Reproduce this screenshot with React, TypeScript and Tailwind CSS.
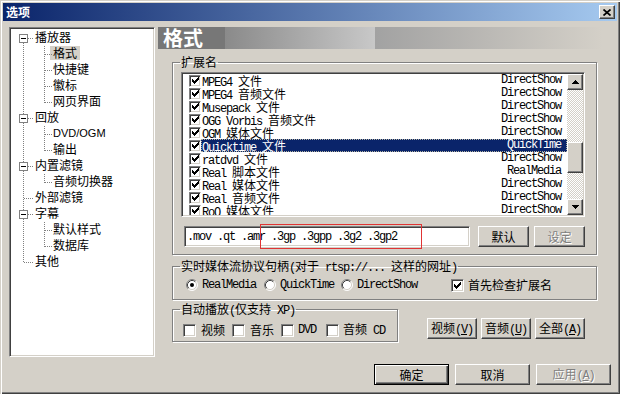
import React from 'react';

const raised =
  'border border-t-white border-l-white border-r-[#404040] border-b-[#404040] shadow-[inset_-1px_-1px_0_#808080]';
const sunken =
  'border border-t-[#808080] border-l-[#808080] border-r-white border-b-white shadow-[inset_1px_1px_0_#404040,inset_-1px_-1px_0_#d4d0c8]';
const cjk = "font-['Noto_Sans_CJK_SC',sans-serif] tracking-normal";
const mono = "font-['Liberation_Mono','Noto_Sans_CJK_SC',monospace] tracking-[-1.2px] whitespace-pre";

// split latin / CJK runs so the latin part gets the narrow fixed font
function Mix({ text }: { text: string }) {
  const parts = text.split(/([\u3000-\u9fff\uff00-\uffef]+)/);
  return (
    <>
      {parts.map((p, i) =>
        p === '' ? null : (
          <span key={i} className={i % 2 ? cjk : mono}>
            {p}
          </span>
        ),
      )}
    </>
  );
}

function Check({ on = false, small = false }: { on?: boolean; small?: boolean }) {
  return (
    <span
      className={`${small ? 'w-[12px] h-[12px]' : 'w-[13px] h-[13px]'} shrink-0 bg-white flex items-center justify-center ${sunken}`}
    >
      {on && (
        <svg width="7" height="7" viewBox="0 0 7 7" shapeRendering="crispEdges">
          <path d="M0 2L2 4L6 0L7 0L7 3L2 7L0 5Z" fill="#000" />
        </svg>
      )}
    </span>
  );
}

function Radio({ on = false }: { on?: boolean }) {
  return (
    <svg width="12" height="12" viewBox="0 0 12 12" className="shrink-0">
      <circle cx="6" cy="6" r="5" fill="#fff" />
      <path d="M9.89 2.11A5.5 5.5 0 0 0 2.11 9.89" fill="none" stroke="#808080" />
      <path d="M9.89 2.11A5.5 5.5 0 0 1 2.11 9.89" fill="none" stroke="#fff" />
      <path d="M9.18 2.82A4.5 4.5 0 0 0 2.82 9.18" fill="none" stroke="#404040" />
      <path d="M9.18 2.82A4.5 4.5 0 0 1 2.82 9.18" fill="none" stroke="#d4d0c8" />
      {on && <circle cx="6" cy="6" r="2" fill="#000" />}
    </svg>
  );
}

function Btn({
  children,
  className = '',
  disabled = false,
  def = false,
}: {
  children: React.ReactNode;
  className?: string;
  disabled?: boolean;
  def?: boolean;
}) {
  const face = def
    ? 'border border-black shadow-[inset_1px_1px_0_#fff,inset_-1px_-1px_0_#404040,inset_-2px_-2px_0_#808080]'
    : raised;
  return (
    <div
      className={`h-[21px] flex items-center justify-center shrink-0 ${face} ${className} ${
        disabled ? 'text-[#808080] [text-shadow:1px_1px_0_#fff]' : 'text-black'
      }`}
    >
      {children}
    </div>
  );
}

function Key({ label, k }: { label: string; k: string }) {
  return (
    <span className="block leading-[14px]">
      <span className={cjk}>{label}</span>
      <span className={mono}>(</span>
      <span className={`${mono} underline`}>{k}</span>
      <span className={mono}>)</span>
    </span>
  );
}

function Legend({ text }: { text: string }) {
  return (
    <legend className="ml-[-1px] px-[1px] h-[14px] leading-[14px]">
      <Mix text={text} />
    </legend>
  );
}

const tree: { t: string; lvl: number; sel?: boolean }[] = [
  { t: '播放器', lvl: 0 },
  { t: '格式', lvl: 1, sel: true },
  { t: '快捷键', lvl: 1 },
  { t: '徽标', lvl: 1 },
  { t: '网页界面', lvl: 1 },
  { t: '回放', lvl: 0 },
  { t: 'DVD/OGM', lvl: 1 },
  { t: '输出', lvl: 1 },
  { t: '内置滤镜', lvl: 0 },
  { t: '音频切换器', lvl: 1 },
  { t: '外部滤镜', lvl: 0 },
  { t: '字幕', lvl: 0 },
  { t: '默认样式', lvl: 1 },
  { t: '数据库', lvl: 1 },
  { t: '其他', lvl: 0 },
];

const parents: [number, number][] = [
  [0, 4],
  [5, 7],
  [8, 9],
  [11, 13],
];

function TreeLines() {
  const c = (i: number) => 8 + 16 * i + 0.5;
  return (
    <svg className="absolute left-[2px] top-[2px] pointer-events-none" width="142" height="326">
      <g stroke="#808080" strokeDasharray="1 1" shapeRendering="crispEdges">
        <line x1="11.5" y1={c(0)} x2="11.5" y2={c(14)} />
        {[10, 14].map((i) => (
          <line key={i} x1="12" y1={c(i)} x2="22" y2={c(i)} />
        ))}
        {parents.map(([p, last]) => (
          <g key={p}>
            <line x1="16" y1={c(p)} x2="22" y2={c(p)} />
            <line x1="32.5" y1={c(p) + 7} x2="32.5" y2={c(last)} />
            {Array.from({ length: last - p }, (_, k) => (
              <line key={k} x1="33" y1={c(p + k + 1)} x2="40" y2={c(p + k + 1)} />
            ))}
          </g>
        ))}
      </g>
      {parents.map(([p]) => (
        <g key={p} shapeRendering="crispEdges">
          <rect x="7.5" y={c(p) - 4} width="8" height="8" fill="#fff" stroke="#808080" />
          <line x1="9" y1={c(p)} x2="14" y2={c(p)} stroke="#000" />
        </g>
      ))}
    </svg>
  );
}

const rows: [string, string, boolean?][] = [
  ['MPEG4 文件', 'DirectShow'],
  ['MPEG4 音频文件', 'DirectShow'],
  ['Musepack 文件', 'DirectShow'],
  ['OGG Vorbis 音频文件', 'DirectShow'],
  ['OGM 媒体文件', 'DirectShow'],
  ['Quicktime 文件', 'QuickTime', true],
  ['ratdvd 文件', 'DirectShow'],
  ['Real 脚本文件', 'RealMedia'],
  ['Real 媒体文件', 'DirectShow'],
  ['Real 音频文件', 'DirectShow'],
  ['RoQ 媒体文件', 'DirectShow'],
];

function Arrow({ up }: { up?: boolean }) {
  return (
    <svg width="7" height="4" viewBox="0 0 7 4" shapeRendering="crispEdges">
      <path d={up ? 'M3.5 0L7 4H0Z' : 'M0 0H7L3.5 4Z'} fill="#000" />
    </svg>
  );
}

export default function App() {
  return (
    <div className="w-[620px] h-[394px] bg-[#d4d0c8] p-[3px] flex flex-col overflow-hidden text-[12px] text-black shadow-[inset_1px_1px_0_#d4d0c8,inset_2px_2px_0_#fff,inset_-1px_-1px_0_#404040,inset_-2px_-2px_0_#808080]">
      {/* Title bar */}
      <div className="h-[18px] shrink-0 flex items-center justify-between pl-[3px] pr-[2px] bg-[linear-gradient(90deg,#0a246a,#a6caf0)]">
        <span className={`${cjk} text-white font-bold leading-[14px]`}>选项</span>
        <div className={`w-[16px] h-[14px] bg-[#d4d0c8] flex items-center justify-center ${raised}`}>
          <svg width="8" height="7" viewBox="0 0 8 7">
            <path d="M0.5 0.5L7.5 6.5M7.5 0.5L0.5 6.5" stroke="#000" strokeWidth="1.7" />
          </svg>
        </div>
      </div>

      <div className="flex mt-[6px] pl-[6px]">
        {/* Tree */}
        <div className={`relative w-[146px] h-[330px] shrink-0 bg-white p-[1px] ${sunken}`}>
          <TreeLines />
          {tree.map((n) => (
            <div
              key={n.t}
              className={`h-[16px] flex items-center ${n.lvl ? 'pl-[39px]' : 'pl-[22px]'}`}
            >
              <span
                className={`h-[14px] leading-[14px] ${n.lvl ? 'px-[3px]' : 'px-[2px]'} ${
                  n.sel ? 'bg-[#d4d0c8]' : ''
                } ${
                  n.t === 'DVD/OGM'
                    ? "font-['Liberation_Sans',sans-serif] text-[11px]"
                    : cjk
                }`}
              >
                {n.t}
              </span>
            </div>
          ))}
        </div>

        {/* Right page */}
        <div className="ml-[3px] w-[454px] flex flex-col">
          <div className="h-[22px] pl-[5px] flex items-center bg-[linear-gradient(90deg,#777_0%,#777_14.7%,#8a8a8a_14.7%,#c8c8c8_47.8%,#a2a2a2_47.8%,#d4d0c8_98%)]">
            <span className={`${cjk} text-white font-bold text-[20px] leading-[22px]`}>格式</span>
          </div>

          <fieldset className="ml-[14px] mt-[6px] w-[425px] px-[8px] pt-[3px] pb-[7px] border border-[#808080] shadow-[inset_1px_1px_0_#fff,1px_1px_0_#fff]">
            <Legend text="扩展名" />
            <div className={`w-[404px] h-[145px] bg-white p-[1px] flex ${sunken}`}>
              <div className="flex-1 overflow-hidden">
                {rows.map(([name, type, sel]) => (
                  <div key={name} className="h-[13px] flex items-center pl-[6px] leading-[13px]">
                    <Check on small />
                    <div
                      className={`flex-1 h-[13px] flex items-center justify-between ${
                        sel
                          ? 'bg-[#0a246a] text-white border border-dotted border-[#b0b0a0] pl-0 pr-[5px]'
                          : 'pl-[1px] pr-[6px]'
                      }`}
                    >
                      <span className="block h-[13px] leading-[13px] overflow-visible">
                        <Mix text={name} />
                      </span>
                      <span className={`block h-[13px] leading-[13px] ${mono}`}>{type}</span>
                    </div>
                  </div>
                ))}
              </div>
              <div className="w-[16px] flex flex-col">
                <div className={`h-[16px] bg-[#d4d0c8] flex items-center justify-center ${raised}`}>
                  <Arrow up />
                </div>
                <div className="flex-1 bg-[image:repeating-conic-gradient(#fff_0%_25%,#d4d0c8_0%_50%)] bg-[length:2px_2px]">
                  <div className={`mt-[52px] h-[31px] bg-[#d4d0c8] ${raised}`} />
                </div>
                <div className={`h-[16px] bg-[#d4d0c8] flex items-center justify-center ${raised}`}>
                  <Arrow />
                </div>
              </div>
            </div>

            <div className="relative flex mt-[9px]">
              <div className={`ml-[3px] w-[286px] h-[21px] bg-white flex items-center pl-[2px] pt-[1px] ${sunken}`}>
                <span className={mono}>.mov .qt .amr .3gp .3gpp .3g2 .3gp2</span>
              </div>
              <Btn className="ml-[8px] w-[51px]">
                <span className={cjk}>默认</span>
              </Btn>
              <Btn className="ml-[5px] w-[51px]" disabled>
                <span className={cjk}>设定</span>
              </Btn>
              <div className="absolute left-[79px] top-[-2px] w-[162px] h-[25px] border-[1.5px] border-[#e03434] pointer-events-none" />
            </div>
          </fieldset>

          <fieldset className="ml-[14px] mt-[4px] w-[425px] px-[8px] pt-[5px] pb-[7px] border border-[#808080] shadow-[inset_1px_1px_0_#fff,1px_1px_0_#fff]">
            <Legend text="实时媒体流协议句柄(对于 rtsp://... 这样的网址)" />
            <div className="h-[14px] flex items-center pl-[5px]">
              <Radio on />
              <span className={`ml-[4px] ${mono}`}>RealMedia</span>
              <span className="ml-[8px]">
                <Radio />
              </span>
              <span className={`ml-[4px] ${mono}`}>QuickTime</span>
              <span className="ml-[7px]">
                <Radio />
              </span>
              <span className={`ml-[4px] ${mono}`}>DirectShow</span>
              <span className="ml-[34px]">
                <Check on />
              </span>
              <span className={`ml-[4px] ${cjk}`}>首先检查扩展名</span>
            </div>
          </fieldset>

          <div className="flex items-start">
            <fieldset className="ml-[14px] mt-[2px] w-[226px] px-[8px] pt-[7px] pb-[4px] border border-[#808080] shadow-[inset_1px_1px_0_#fff,1px_1px_0_#fff]">
              <Legend text="自动播放(仅支持 XP)" />
              <div className="h-[14px] flex items-center pl-[2px]">
                <Check />
                <span className={`ml-[5px] ${cjk}`}>视频</span>
                <span className="ml-[7px]">
                  <Check />
                </span>
                <span className={`ml-[5px] ${cjk}`}>音乐</span>
                <span className="ml-[7px]">
                  <Check />
                </span>
                <span className={`ml-[4px] ${mono}`}>DVD</span>
                <span className="ml-[10px]">
                  <Check />
                </span>
                <span className="ml-[4px] block leading-[14px]">
                  <Mix text="音频 CD" />
                </span>
              </div>
            </fieldset>
            <div className="ml-[29px] mt-[18px] flex gap-[4px]">
              <Btn className="w-[50px]">
                <Key label="视频" k="V" />
              </Btn>
              <Btn className="w-[50px]">
                <Key label="音频" k="U" />
              </Btn>
              <Btn className="w-[50px]">
                <Key label="全部" k="A" />
              </Btn>
            </div>
          </div>
        </div>
      </div>

      {/* Dialog buttons */}
      <div className="mt-[7px] flex justify-end gap-[6px] pr-[6px]">
        <Btn className="w-[75px]" def>
          <span className={cjk}>确定</span>
        </Btn>
        <Btn className="w-[75px]">
          <span className={cjk}>取消</span>
        </Btn>
        <Btn className="w-[75px]" disabled>
          <Key label="应用" k="A" />
        </Btn>
      </div>
    </div>
  );
}
